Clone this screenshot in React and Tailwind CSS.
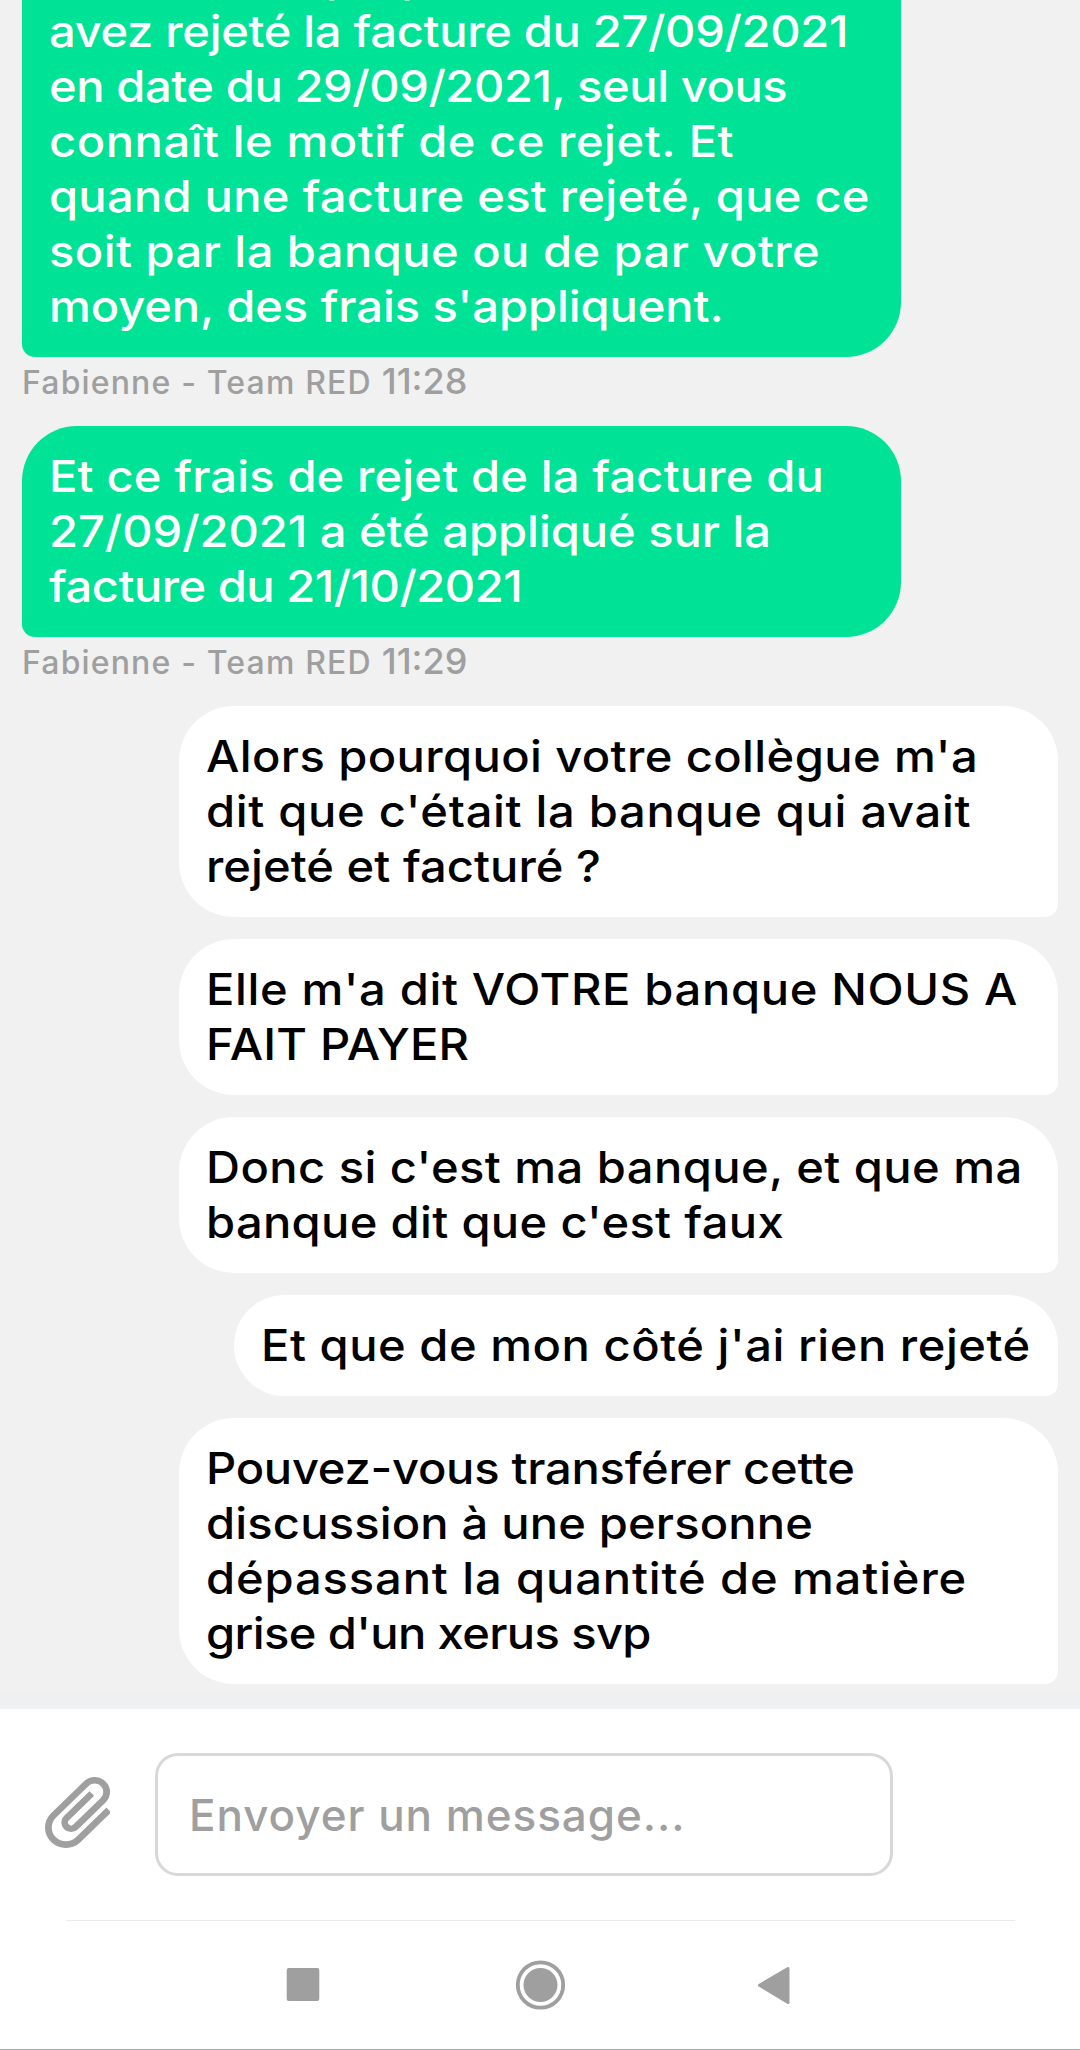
import clsx from 'clsx'

const messages = [
  {
    id: 1,
    from: 'agent',
    time: '11:28',
    lines: [
      { text: 'avez rejeté la facture du 27/09/2021', tracking: 'tracking-[-0.3px]' },
      { text: 'en date du 29/09/2021, seul vous', tracking: 'tracking-[-0.4px]' },
      { text: 'connaît le motif de ce rejet. Et', tracking: 'tracking-[0.5px]' },
      { text: 'quand une facture est rejeté, que ce', tracking: 'tracking-[0.23px]' },
      { text: 'soit par la banque ou de par votre', tracking: 'tracking-[0.42px]' },
      { text: "moyen, des frais s'appliquent.", tracking: 'tracking-[-0.08px]' },
    ],
  },
  {
    id: 2,
    from: 'agent',
    time: '11:29',
    lines: [
      { text: 'Et ce frais de rejet de la facture du', tracking: 'tracking-[0.13px]' },
      { text: '27/09/2021 a été appliqué sur la', tracking: 'tracking-[-0.04px]' },
      { text: 'facture du 21/10/2021', tracking: 'tracking-[-0.48px]' },
    ],
  },
  {
    id: 3,
    from: 'me',
    lines: [
      { text: "Alors pourquoi votre collègue m'a", tracking: 'tracking-[0.37px]' },
      { text: "dit que c'était la banque qui avait", tracking: 'tracking-[0.64px]' },
      { text: 'rejeté et facturé ?', tracking: 'tracking-[0.04px]' },
    ],
  },
  {
    id: 4,
    from: 'me',
    lines: [
      { text: "Elle m'a dit VOTRE banque NOUS A", tracking: 'tracking-[0.61px]' },
      { text: 'FAIT PAYER', tracking: 'tracking-[0.2px]' },
    ],
  },
  {
    id: 5,
    from: 'me',
    lines: [
      { text: "Donc si c'est ma banque, et que ma", tracking: 'tracking-[0.41px]' },
      { text: "banque dit que c'est faux", tracking: 'tracking-[0.31px]' },
    ],
  },
  {
    id: 6,
    from: 'me',
    short: true,
    lines: [{ text: "Et que de mon côté j'ai rien rejeté", tracking: 'tracking-[0.5px]' }],
  },
  {
    id: 7,
    from: 'me',
    lines: [
      { text: 'Pouvez-vous transférer cette', tracking: 'tracking-[-0.24px]' },
      { text: 'discussion à une personne', tracking: 'tracking-[0.16px]' },
      { text: 'dépassant la quantité de matière', tracking: 'tracking-[0.82px]' },
      { text: "grise d'un xerus svp", tracking: 'tracking-[-0.58px]' },
    ],
  },
]

const Bubble = ({ message }) => {
  const mine = message.from === 'me'
  return (
    <div className={clsx('flex flex-col', mine ? 'items-end' : 'items-start')}>
      <div
        className={clsx(
          'px-[27px] py-[23px] text-[44px] leading-[55px] font-medium whitespace-nowrap rounded-[55px]',
          mine ? 'bg-white text-black rounded-br-[13px]' : 'bg-[#00e295] text-white rounded-bl-[13px]',
          message.short ? 'w-[824px]' : 'w-[879px]'
        )}
      >
        {/* Tail of the line scrolled off the top */}
        {message.id === 1 && (
          <p className="flex gap-[48px] pl-[277px]">
            <span>p</span>
            <span>p</span>
          </p>
        )}
        {message.lines.map((line) => (
          <p key={line.text} className={clsx('origin-left scale-x-[1.07]', line.tracking)}>
            {line.text}
          </p>
        ))}
      </div>
      {!mine && (
        <p className="flex items-baseline gap-[10px] h-[47px] pt-px leading-[47px] font-medium text-[#9f9f9f]">
          <span className="text-[32px] tracking-[1.15px]">Fabienne - Team RED</span>
          <span className="text-[36px]">{message.time}</span>
        </p>
      )}
    </div>
  )
}

const Paperclip = () => (
  <svg className="w-[65px] h-[71px] mb-1 shrink-0" viewBox="-9.2 7.15 17.6 19.75" preserveAspectRatio="none" fill="#9f9f9f">
    <path
      transform="rotate(45)"
      stroke="#9f9f9f"
      strokeWidth="0.32"
      d="M16.5 6v11.5c0 2.21-1.79 4-4 4s-4-1.79-4-4V5c0-1.38 1.12-2.5 2.5-2.5s2.5 1.12 2.5 2.5v10.5c0 .55-.45 1-1 1s-1-.45-1-1V6H10v9.5c0 1.38 1.12 2.5 2.5 2.5s2.5-1.12 2.5-2.5V5c0-2.21-1.79-4-4-4S7 2.79 7 5v12.5c0 3.04 2.46 5.5 5.5 5.5s5.5-2.46 5.5-5.5V6h-1.5z"
    />
  </svg>
)

const App = () => {
  return (
    <div className="w-[1080px] h-[2050px] flex flex-col overflow-hidden bg-white font-[Inter,'Liberation_Sans',sans-serif]">
      {/* Conversation */}
      <div className="h-[1709px] shrink-0 flex flex-col justify-end overflow-hidden bg-[#f1f1f1]">
        <div className="flex flex-col gap-[22px] px-[22px] pb-2">
          {messages.map((m) => <Bubble key={m.id} message={m} />)}
        </div>
        <div className="h-[17px] shrink-0 bg-[#eef0f2]" />
      </div>

      {/* Message input */}
      <div className="h-[211px] shrink-0 flex items-center gap-[45px] pl-[45px]">
        <Paperclip />
        <input
          className="w-[738px] h-[123px] px-[31px] rounded-[23px] border-[3px] border-[#d8d8d8] text-[44px] font-medium tracking-[0.95px] placeholder:text-[#9f9f9f] placeholder:opacity-100"
          placeholder="Envoyer un message..."
        />
      </div>
      <div className="h-px shrink-0 ml-[66px] mr-[65px] bg-[#ebebeb]" />

      {/* Navigation bar */}
      <div className="flex-1 border-b border-[#a8a8a8]">
        <svg className="block w-[1080px] h-[128px]" viewBox="0 1921 1080 128" fill="#9f9f9f">
          <rect x="286.7" y="1968" width="32.6" height="33" rx="2" />
          <circle cx="540.5" cy="1985" r="22.7" fill="none" stroke="#9f9f9f" strokeWidth="3.8" />
          <circle cx="540.5" cy="1985" r="17" />
          <path d="M759.5 1985.3L788 1968.5V2002.5Z" stroke="#9f9f9f" strokeWidth="3" strokeLinejoin="round" />
        </svg>
      </div>
    </div>
  )
}

export default App
